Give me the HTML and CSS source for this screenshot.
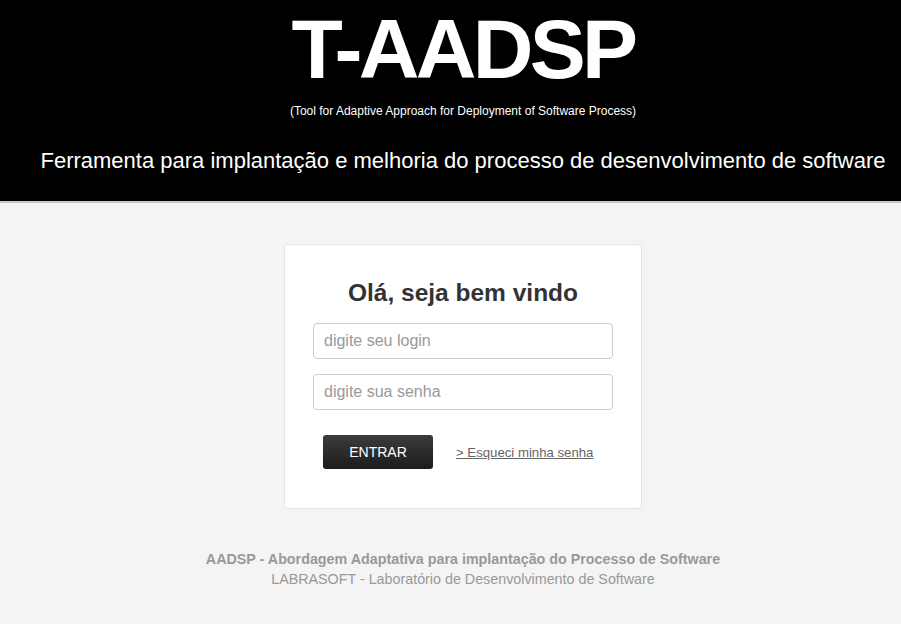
FILE: index.html
```html
<!DOCTYPE html>
<html lang="pt">
<head>
<meta charset="utf-8">
<title>T-AADSP</title>
<link rel="stylesheet" href="styles.css">
</head>
<body>
<header class="topo">
  <div class="topo-inner">
    <h1 class="marca">T-AADSP</h1>
    <p class="sigla">(Tool for Adaptive Approach for Deployment of Software Process)</p>
    <p class="slogan">Ferramenta para implantação e melhoria do processo de desenvolvimento de software</p>
  </div>
</header>
<main class="conteudo">
  <form class="cartao">
    <h2 class="saudacao">Olá, seja bem vindo</h2>
    <input class="campo" type="text" placeholder="digite seu login">
    <input class="campo" type="password" placeholder="digite sua senha">
    <div class="acoes">
      <button class="botao" type="button">ENTRAR</button>
      <a class="esqueci" href="#">&gt; Esqueci minha senha</a>
    </div>
  </form>
  <footer class="rodape">
    <p class="rodape-titulo">AADSP - Abordagem Adaptativa para implantação do Processo de Software</p>
    <p class="rodape-lab">LABRASOFT - Laboratório de Desenvolvimento de Software</p>
  </footer>
</main>
</body>
</html>
```
FILE: styles.css
```css
html, body {
  margin: 0;
  padding: 0;
}
body {
  background: #f4f4f4;
  font-family: "Liberation Sans", Arial, sans-serif;
  color: #333;
  overflow: hidden;
}
.topo {
  background: #000;
  color: #fff;
  height: 201px;
  border-bottom: 2px solid #c9c9c9;
}
.topo-inner {
  padding-left: 25px;
  text-align: center;
}
.marca {
  margin: 0;
  padding-top: 7px;
  font-size: 84px;
  line-height: 84px;
  font-weight: bold;
  letter-spacing: -3.7px;
}
.sigla {
  margin: 13px 0 0;
  font-size: 12px;
  line-height: 14px;
}
.slogan {
  margin: 30px 0 0;
  font-size: 22px;
  line-height: 26px;
}
.conteudo {
  padding-left: 25px;
  display: flex;
  flex-direction: column;
  align-items: center;
}
.cartao {
  margin-top: 41px;
  width: 358px;
  height: 265px;
  box-sizing: border-box;
  background: #fff;
  border: 1px solid #e3e3e3;
  border-radius: 4px;
  padding: 34px 29px 0;
  display: flex;
  flex-direction: column;
  align-items: center;
}
.saudacao {
  margin: 0 0 16px;
  font-size: 24.5px;
  line-height: 28px;
  font-weight: bold;
  color: #333;
}
.campo {
  width: 300px;
  height: 36px;
  box-sizing: border-box;
  border: 1px solid #ccc;
  border-radius: 4px;
  padding: 0 10px;
  font-family: "Liberation Sans", Arial, sans-serif;
  font-size: 16px;
  color: #555;
  margin-bottom: 15px;
  background: #fff;
}
.campo::placeholder {
  color: #999;
}
.acoes {
  align-self: stretch;
  display: flex;
  align-items: center;
  gap: 23px;
  padding-left: 9px;
  margin-top: 10px;
}
.botao {
  width: 110px;
  height: 34px;
  border: none;
  border-radius: 3px;
  background: linear-gradient(#3c3c3c, #1c1c1c);
  color: #fff;
  font-family: "Liberation Sans", Arial, sans-serif;
  font-size: 14px;
  padding: 0;
}
.esqueci {
  color: #666;
  font-size: 13.2px;
  text-decoration: underline;
}
.rodape {
  margin-top: 40px;
  text-align: center;
  color: #999;
  font-size: 14.3px;
  line-height: 20px;
}
.rodape p {
  margin: 0;
}
.rodape-titulo {
  font-weight: bold;
}
```
